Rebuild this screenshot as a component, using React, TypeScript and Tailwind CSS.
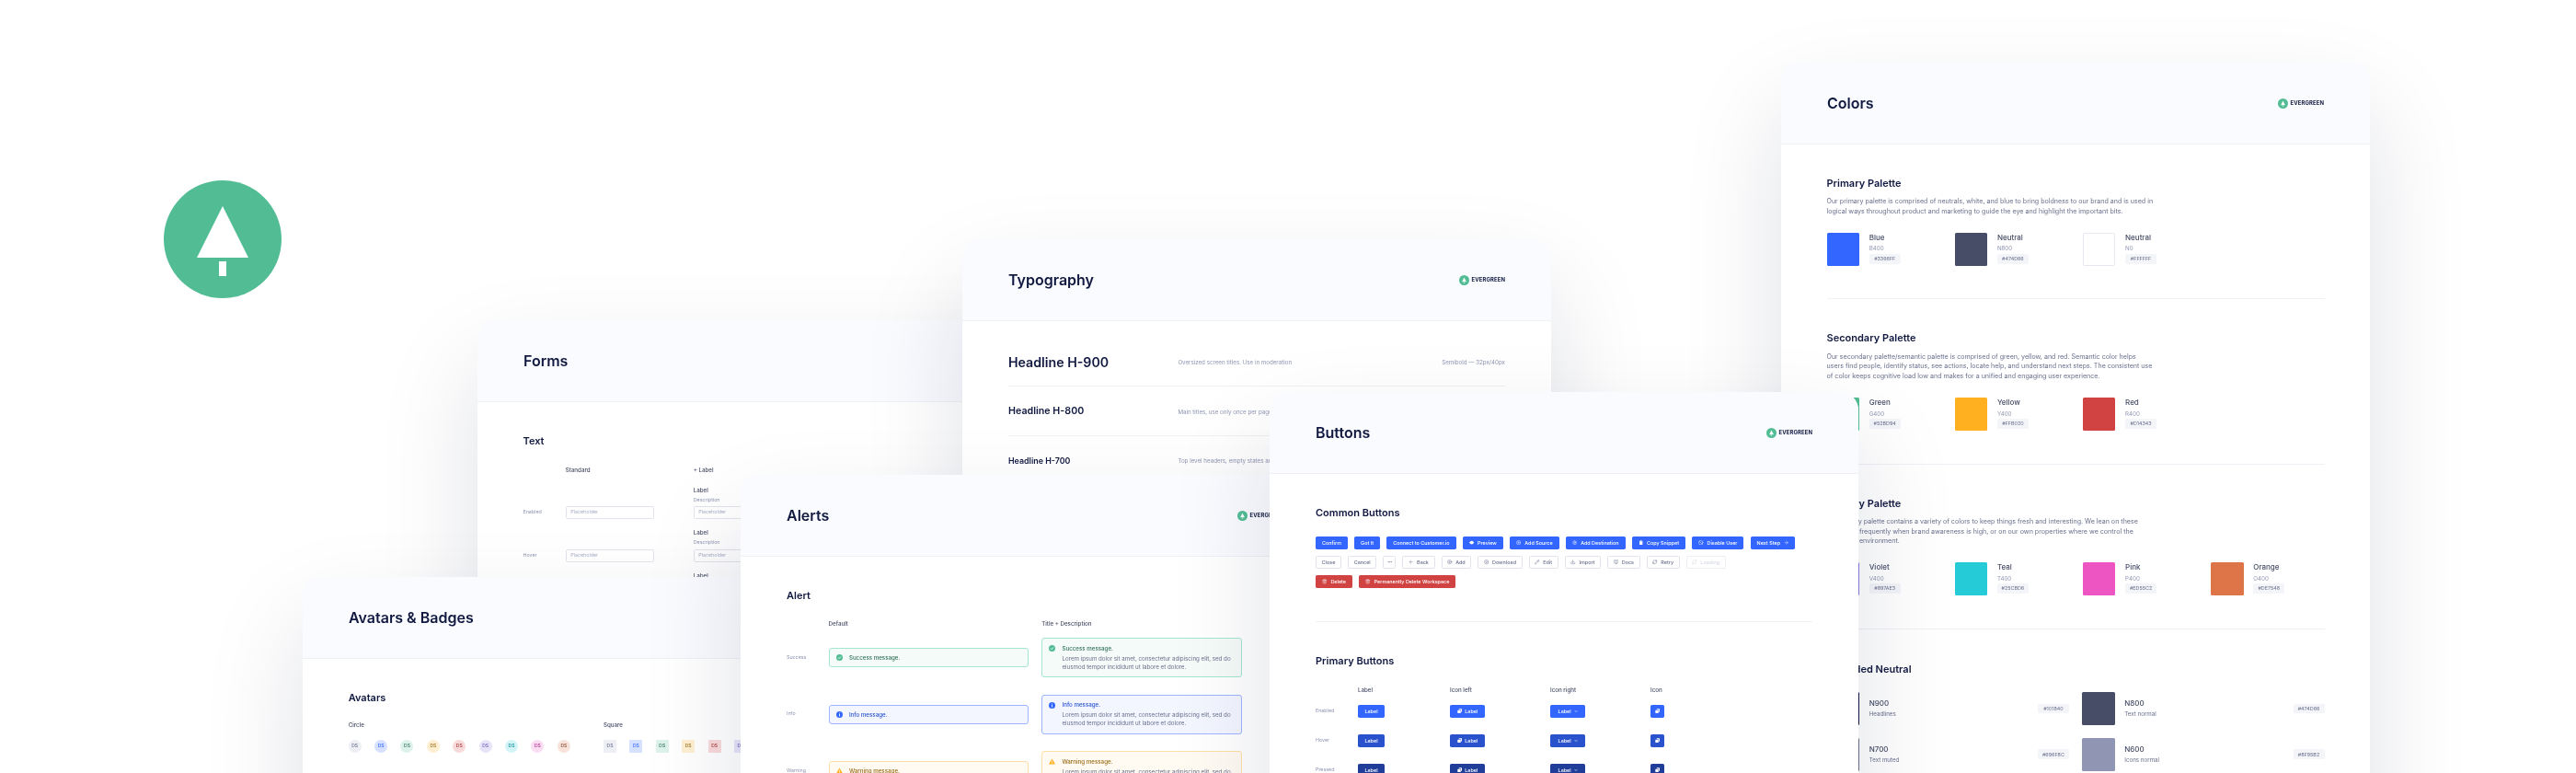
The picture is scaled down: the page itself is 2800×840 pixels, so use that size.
import { ReactNode } from "react";
import {
  ArrowLeft,
  ArrowRight,
  Ban,
  BookOpen,
  ChevronDown,
  CircleArrowDown,
  CirclePlus,
  Download,
  Ellipsis,
  Eye,
  Pencil,
  RefreshCw,
  Settings,
  Trash2,
} from "lucide-react";

function Tree({ className }: { className: string }) {
  return (
    <svg viewBox="0 0 128 128" className={className}>
      <circle cx="64" cy="64" r="64" fill="#52BD94" />
      <path d="M64 28L92 84H36Z" fill="#fff" />
      <rect x="60" y="88" width="8" height="16" fill="#fff" />
    </svg>
  );
}

function Logo() {
  return (
    <div className="flex items-center gap-[3px]">
      <Tree className="w-[11px] h-[11px]" />
      <span className="text-[5.9px] font-bold tracking-[0.02em] text-[#101840]">EVERGREEN</span>
    </div>
  );
}

// one design-system sheet, placed on the free canvas by the caller
function Sheet({ title, logo = true, className, children }: { title: string; logo?: boolean; className: string; children: ReactNode }) {
  return (
    <div className={`absolute w-[640px] h-[900px] bg-white rounded-[20px] overflow-hidden shadow-[0_50px_110px_rgba(16,24,64,0.13)] ${className}`}>
      <div className="h-[89px] flex items-center justify-between px-[50px] bg-[#FAFBFF] border-b border-[#EFF0F6]">
        <h1 className="text-[16px] leading-[20px] font-semibold text-[#101840]">{title}</h1>
        {logo && <Logo />}
      </div>
      {children}
    </div>
  );
}

const sectionTitle = "text-[11px] leading-[16px] font-semibold text-[#101840]";

type Chip = { name: string; code: string; hex: string; bg: string };

const primary: Chip[] = [
  { name: "Blue", code: "B400", hex: "#3366FF", bg: "bg-[#3366FF]" },
  { name: "Neutral", code: "N800", hex: "#474D66", bg: "bg-[#474D66]" },
  { name: "Neutral", code: "N0", hex: "#FFFFFF", bg: "bg-white border border-[#E6E8F0]" },
];
const secondary: Chip[] = [
  { name: "Green", code: "G400", hex: "#52BD94", bg: "bg-[#52BD94]" },
  { name: "Yellow", code: "Y400", hex: "#FFB020", bg: "bg-[#FFB020]" },
  { name: "Red", code: "R400", hex: "#D14343", bg: "bg-[#D14343]" },
];
const tertiary: Chip[] = [
  { name: "Violet", code: "V400", hex: "#897AE3", bg: "bg-[#897AE3]" },
  { name: "Teal", code: "T400", hex: "#25CBD6", bg: "bg-[#25CBD6]" },
  { name: "Pink", code: "P400", hex: "#ED55C2", bg: "bg-[#ED55C2]" },
  { name: "Orange", code: "O400", hex: "#DE7548", bg: "bg-[#DE7548]" },
];
const neutrals = [
  { name: "N900", note: "Headlines", hex: "#101840", bg: "bg-[#101840]" },
  { name: "N800", note: "Text normal", hex: "#474D66", bg: "bg-[#474D66]" },
  { name: "N700", note: "Text muted", hex: "#696F8C", bg: "bg-[#696F8C]" },
  { name: "N600", note: "Icons normal", hex: "#8F95B2", bg: "bg-[#8F95B2]" },
];

function HexChip({ hex }: { hex: string }) {
  return <span className="h-[10.7px] w-[34px] flex items-center justify-center rounded-[1.5px] bg-[#F4F5F9] text-[5.4px] text-[#696F8C]">{hex}</span>;
}

function Swatches({ items }: { items: Chip[] }) {
  return (
    <div className="mt-[17.3px] grid grid-cols-[repeat(4,139.2px)]">
      {items.map((c) => (
        <div key={c.hex} className="flex gap-[10.6px]">
          <div className={`w-[35.6px] h-[36px] rounded-[1.5px] ${c.bg}`} />
          <div className="flex flex-col items-start">
            <span className="text-[8px] leading-[11px] font-medium text-[#474D66]">{c.name}</span>
            <span className="mt-[1.5px] text-[6.2px] leading-[9px] text-[#8F95B2]">{c.code}</span>
            <span className="mt-[1.5px]"><HexChip hex={c.hex} /></span>
          </div>
        </div>
      ))}
    </div>
  );
}

function Palette({ title, lines, items }: { title: string; lines: string[]; items: Chip[] }) {
  return (
    <section className="pt-[34px] pb-[35.5px] border-b border-[#F0F1F6]">
      <h2 className={sectionTitle}>{title}</h2>
      <div className="mt-[7.3px] text-[7.1px] leading-[10.67px] text-[#696F8C]">
        {lines.map((l) => (
          <p key={l} className="whitespace-nowrap">{l}</p>
        ))}
      </div>
      <Swatches items={items} />
    </section>
  );
}

function ColorsSheet() {
  return (
    <Sheet title="Colors" className="left-[1936px] top-[68px] z-10">
      <div className="px-[49.5px]">
        <Palette
          title="Primary Palette"
          lines={[
            "Our primary palette is comprised of neutrals, white, and blue to bring boldness to our brand and is used in",
            "logical ways throughout product and marketing to guide the eye and highlight the important bits.",
          ]}
          items={primary}
        />
        <Palette
          title="Secondary Palette"
          lines={[
            "Our secondary palette/semantic palette is comprised of green, yellow, and red. Semantic color helps",
            "users find people, identify status, see actions, locate help, and understand next steps. The consistent use",
            "of color keeps cognitive load low and makes for a unified and engaging user experience.",
          ]}
          items={secondary}
        />
        <Palette
          title="Tertiary Palette"
          lines={[
            "Our tertiary palette contains a variety of colors to keep things fresh and interesting. We lean on these",
            "colors too frequently when brand awareness is high, or on our own properties where we control the",
            "marketing environment.",
          ]}
          items={tertiary}
        />
        <section className="pt-[35px]">
          <h2 className={sectionTitle}>Extended Neutral</h2>
          <div className="mt-[17.3px] grid grid-cols-2 gap-x-[14.2px] gap-y-[13.7px]">
            {neutrals.map((n) => (
              <div key={n.name} className="flex items-center">
                <div className={`w-[35.6px] h-[36px] rounded-[1.5px] ${n.bg}`} />
                <div className="ml-[10.6px] flex flex-col">
                  <span className="text-[8px] leading-[11px] font-medium text-[#474D66]">{n.name}</span>
                  <span className="mt-[1px] text-[6.2px] leading-[9px] text-[#696F8C]">{n.note}</span>
                </div>
                <span className="ml-auto"><HexChip hex={n.hex} /></span>
              </div>
            ))}
          </div>
        </section>
      </div>
    </Sheet>
  );
}

function FilledClip({ className }: { className?: string }) {
  return (
    <svg viewBox="0 0 16 16" className={className} fill="currentColor">
      <path d="M6 1h4v2H6zM3 2.5h2V4h6V2.5h2V15H3z" />
    </svg>
  );
}

function DuplicateIcon({ className }: { className?: string }) {
  return (
    <svg viewBox="0 0 16 16" className={className} fill="currentColor">
      <path d="M6 1h8a1 1 0 0 1 1 1v8a1 1 0 0 1-1 1h-2V5a1 1 0 0 0-1-1H5V2a1 1 0 0 1 1-1z" />
      <path d="M2 5h8a1 1 0 0 1 1 1v8a1 1 0 0 1-1 1H2a1 1 0 0 1-1-1V6a1 1 0 0 1 1-1z" />
    </svg>
  );
}

const ic = "w-[5.4px] h-[5.4px]";
const base = "h-[14.2px] flex items-center rounded-[1.8px] text-[5.45px] font-medium whitespace-nowrap";
const blue = `${base} px-[7px] gap-[4px] bg-[#3366FF] text-white`;
const outline = `${base} bg-white border border-[#E2E4EC] text-[#696F8C]`;
const plain = `${outline} px-[5.6px] gap-[3.6px]`;
const red = `${base} px-[7px] gap-[4px] bg-[#D14343] text-white`;

const states = [
  { name: "Enabled", bg: "bg-[#3366FF]" },
  { name: "Hover", bg: "bg-[#2952CC]" },
  { name: "Pressed", bg: "bg-[#1F3D99]" },
];
const stateCols = "grid grid-cols-[46px_100px_109px_109px_auto] items-center";

function ButtonsSheet() {
  return (
    <Sheet title="Buttons" className="left-[1380px] top-[426px] z-50">
      <div className="px-[50px]">
        <section className="pt-[34px] pb-[36px] border-b border-[#F0F1F6]">
          <h2 className={sectionTitle}>Common Buttons</h2>
          <div className="mt-[17.5px] flex flex-col gap-[7.1px]">
            <div className="flex gap-[7.1px]">
              <button className={blue}>Confirm</button>
              <button className={blue}>Got It</button>
              <button className={blue}>Connect to Customer.io</button>
              <button className={blue}><Eye className={ic} fill="currentColor" />Preview</button>
              <button className={blue}><CirclePlus className={ic} />Add Source</button>
              <button className={blue}><Settings className={ic} />Add Destination</button>
              <button className={blue}><FilledClip className={ic} />Copy Snippet</button>
              <button className={blue}><Ban className={ic} />Disable User</button>
              <button className={blue}>Next Step<ArrowRight className={ic} /></button>
            </div>
            <div className="flex gap-[7.1px]">
              <button className={plain}>Close</button>
              <button className={plain}>Cancel</button>
              <button className={`${outline} w-[14px] justify-center`}><Ellipsis className={ic} /></button>
              <button className={plain}><ArrowLeft className={ic} />Back</button>
              <button className={plain}><CirclePlus className={ic} />Add</button>
              <button className={plain}><CircleArrowDown className={ic} />Download</button>
              <button className={plain}><Pencil className={ic} />Edit</button>
              <button className={plain}><Download className={ic} />Import</button>
              <button className={plain}><BookOpen className={ic} />Docs</button>
              <button className={plain}><RefreshCw className={ic} />Retry</button>
              <button className={`${plain} !border-[#EDEFF5] !text-[#D8DAE5]`}><RefreshCw className={ic} />Loading</button>
            </div>
            <div className="flex gap-[7.1px]">
              <button className={red}><Trash2 className={ic} />Delete</button>
              <button className={red}><Trash2 className={ic} />Permanently Delete Workspace</button>
            </div>
          </div>
        </section>
        <section className="pt-[34px]">
          <h2 className={sectionTitle}>Primary Buttons</h2>
          <div className={`mt-[19.5px] ${stateCols}`}>
            <span />
            {["Label", "Icon left", "Icon right", "Icon"].map((h) => (
              <span key={h} className="text-[6.2px] leading-[8px] font-medium text-[#474D66]">{h}</span>
            ))}
          </div>
          <div className={`mt-[12px] gap-y-[17.8px] ${stateCols}`}>
            {states.map((s) => (
              <div key={s.name} className="contents">
                <span className="text-[5.33px] text-[#8F95B2]">{s.name}</span>
                <div><button className={`${base} w-[29px] justify-center text-white ${s.bg}`}>Label</button></div>
                <div><button className={`${base} w-[38.3px] justify-center gap-[3px] text-white ${s.bg}`}><DuplicateIcon className={ic} />Label</button></div>
                <div><button className={`${base} w-[38.3px] justify-center gap-[3px] text-white ${s.bg}`}>Label<ChevronDown className="w-[4px] h-[4px]" strokeWidth={4} /></button></div>
                <div><button className={`${base} w-[14.7px] justify-center text-white ${s.bg}`}><DuplicateIcon className={ic} /></button></div>
              </div>
            ))}
          </div>
        </section>
      </div>
    </Sheet>
  );
}

function TypographySheet() {
  const rows = [
    { name: "Headline H-900", size: "text-[14.2px]", note: "Oversized screen titles. Use in moderation", spec: "Semibold — 32px/40px" },
    { name: "Headline H-800", size: "text-[10.7px]", note: "Main titles, use only once per page", spec: "Semibold — 24px/32px" },
    { name: "Headline H-700", size: "text-[8.9px]", note: "Top level headers, empty states and dialogs", spec: "Semibold — 20px/28px" },
  ];
  return (
    <Sheet title="Typography" className="left-[1046px] top-[260px] z-20">
      <div className="px-[50px] pt-[17.5px]">
        {rows.map((r) => (
          <div key={r.name} className="h-[53.8px] pt-[1px] flex items-center border-b border-[#F0F1F6]">
            <span className={`w-[184.4px] font-semibold text-[#101840] ${r.size}`}>{r.name}</span>
            <span className="text-[6.2px] text-[#8F95B2]">{r.note}</span>
            <span className="ml-auto text-[6.2px] text-[#8F95B2]">{r.spec}</span>
          </div>
        ))}
      </div>
    </Sheet>
  );
}

function AlertIcon({ kind }: { kind: string }) {
  if (kind === "success") {
    return (
      <svg viewBox="0 0 16 16" className="w-[7px] h-[7px] shrink-0">
        <circle cx="8" cy="8" r="8" fill="#52BD94" />
        <path d="M4.5 8.2l2.4 2.4 4.6-4.8" fill="none" stroke="#fff" strokeWidth="2" />
      </svg>
    );
  }
  if (kind === "info") {
    return (
      <svg viewBox="0 0 16 16" className="w-[7px] h-[7px] shrink-0">
        <circle cx="8" cy="8" r="8" fill="#3366FF" />
        <rect x="7" y="7" width="2" height="5.5" fill="#fff" />
        <rect x="7" y="3.5" width="2" height="2" fill="#fff" />
      </svg>
    );
  }
  return (
    <svg viewBox="0 0 16 16" className="w-[7px] h-[7px] shrink-0">
      <path d="M8 1l8 14H0z" fill="#FFB020" />
      <rect x="7.2" y="6" width="1.6" height="5" fill="#fff" />
      <rect x="7.2" y="12" width="1.6" height="1.6" fill="#fff" />
    </svg>
  );
}

const alerts = [
  { kind: "success", label: "Success", msg: "Success message.", box: "bg-[#F5FBF8] border-[#A3E6CD]", text: "text-[#317159]" },
  { kind: "info", label: "Info", msg: "Info message.", box: "bg-[#F3F6FF] border-[#9DB5FF]", text: "text-[#2952CC]" },
  { kind: "warning", label: "Warning", msg: "Warning message.", box: "bg-[#FFFAF2] border-[#FFDFA6]", text: "text-[#996A13]" },
];

function AlertsSheet() {
  return (
    <Sheet title="Alerts" className="left-[805px] top-[516px] z-40">
      <div className="px-[50px] pt-[34px]">
        <h2 className={sectionTitle}>Alert</h2>
        <div className="mt-[18.5px] flex text-[6.2px] leading-[8px] font-medium text-[#474D66]">
          <span className="ml-[45.6px] w-[231.6px]">Default</span>
          <span>Title + Description</span>
        </div>
        <div className="mt-[11.6px] flex flex-col gap-[18.2px]">
          {alerts.map((a) => (
            <div key={a.kind} className="flex items-center">
              <span className="w-[45.6px] text-[5.33px] text-[#8F95B2]">{a.label}</span>
              <div className={`w-[217.2px] h-[21.4px] flex items-center gap-[7px] pl-[7.3px] border rounded-[3px] ${a.box}`}>
                <AlertIcon kind={a.kind} />
                <span className={`text-[6.2px] font-medium ${a.text}`}>{a.msg}</span>
              </div>
              <div className={`ml-[14.4px] w-[217.6px] h-[43.4px] flex gap-[7px] pl-[7.3px] pt-[6.7px] border rounded-[3px] ${a.box}`}>
                <span className="mt-[0.5px]"><AlertIcon kind={a.kind} /></span>
                <div>
                  <p className={`text-[6.2px] leading-[8px] font-medium ${a.text}`}>{a.msg}</p>
                  <p className="mt-[2px] text-[6.2px] leading-[9px] text-[#696F8C]">
                    Lorem ipsum dolor sit amet, consectetur adipiscing elit, sed do
                    <br />
                    eiusmod tempor incididunt ut labore et dolore.
                  </p>
                </div>
              </div>
            </div>
          ))}
        </div>
      </div>
    </Sheet>
  );
}

const avatarTones = [
  "bg-[#EDEFF5] text-[#696F8C]",
  "bg-[#D6E0FF] text-[#3366FF]",
  "bg-[#DCF2EA] text-[#317159]",
  "bg-[#FFEFD2] text-[#996A13]",
  "bg-[#F9DADA] text-[#A73636]",
  "bg-[#E7E4F9] text-[#6E62B6]",
  "bg-[#D3F5F7] text-[#10899E]",
  "bg-[#FBDDF3] text-[#AD2D8B]",
  "bg-[#F8E3DA] text-[#85462B]",
];

function AvatarRow({ round }: { round: boolean }) {
  return (
    <div className="mt-[12px] flex gap-[14.4px]">
      {avatarTones.map((tone) => (
        <span key={tone} className={`w-[14px] h-[14px] shrink-0 flex items-center justify-center text-[5px] font-medium ${tone} ${round ? "rounded-full" : "rounded-[1px]"}`}>DS</span>
      ))}
    </div>
  );
}

function AvatarsSheet() {
  return (
    <Sheet title="Avatars & Badges" logo={false} className="left-[329px] top-[627px] z-30">
      <div className="px-[49.7px] pt-[34px]">
        <h2 className={sectionTitle}>Avatars</h2>
        <div className="mt-[18px] flex">
          <div className="w-[277.3px] shrink-0">
            <span className="block text-[6.2px] leading-[8px] font-medium text-[#474D66]">Circle</span>
            <AvatarRow round />
          </div>
          <div className="shrink-0">
            <span className="block text-[6.2px] leading-[8px] font-medium text-[#474D66]">Square</span>
            <AvatarRow round={false} />
          </div>
        </div>
      </div>
    </Sheet>
  );
}

function TextField({ labelled }: { labelled?: boolean }) {
  return (
    <div className="w-[96px] shrink-0">
      {labelled && (
        <>
          <span className="block text-[6.2px] leading-[8.5px] font-medium text-[#474D66]">Label</span>
          <span className="block mt-[1.5px] text-[5.33px] leading-[8px] text-[#8F95B2]">Description</span>
          <span className="block h-[3.5px]" />
        </>
      )}
      <div className="h-[14px] flex items-center px-[4.6px] bg-white border border-[#E2E4EC] rounded-[1.8px] text-[5.33px] text-[#A9AEC6]">Placeholder</div>
    </div>
  );
}

function FormsSheet() {
  return (
    <Sheet title="Forms" logo={false} className="left-[519px] top-[348px] z-[5]">
      <div className="px-[49.5px] pt-[34px]">
        <h2 className={sectionTitle}>Text</h2>
        <div className="mt-[19.5px] flex text-[6.2px] leading-[8px] font-medium text-[#474D66]">
          <span className="ml-[46.2px] w-[139px]">Standard</span>
          <span>+ Label</span>
        </div>
        <div className="mt-[14px] flex flex-col gap-[11.4px]">
          {["Enabled", "Hover", "Focus"].map((s) => (
            <div key={s} className="flex items-end">
              <span className="w-[46.2px] h-[14px] flex items-center text-[5.33px] text-[#8F95B2]">{s}</span>
              <TextField />
              <span className="w-[43px] shrink-0" />
              <TextField labelled />
            </div>
          ))}
        </div>
      </div>
    </Sheet>
  );
}

export default function App() {
  return (
    <div className="relative w-[2800px] h-[840px] overflow-hidden bg-white font-['Inter',sans-serif] blur-[0.4px]">
      <Tree className="absolute left-[178px] top-[196px] w-[128px] h-[128px]" />
      <FormsSheet />
      <ColorsSheet />
      <TypographySheet />
      <AvatarsSheet />
      <AlertsSheet />
      <ButtonsSheet />
    </div>
  );
}
